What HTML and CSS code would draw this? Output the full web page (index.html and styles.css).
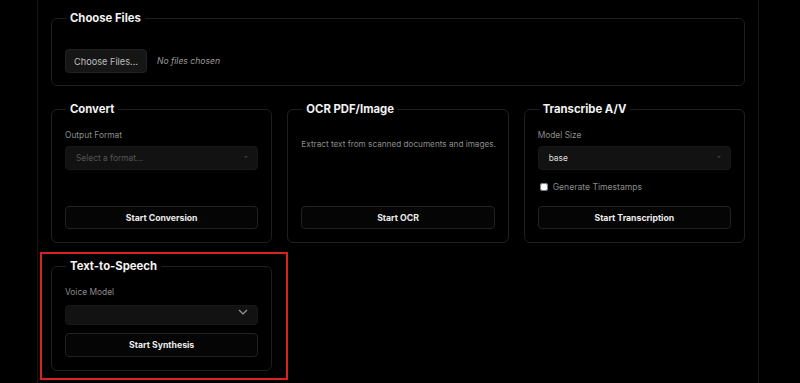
FILE: index.html
```html
<!DOCTYPE html>
<html lang="en">
<head>
  <meta charset="UTF-8">
  <meta name="viewport" content="width=device-width, initial-scale=1.0">
  <title>Media Tools</title>
  <link rel="stylesheet" href="styles.css">
</head>
<body>
  <div class="panel">
    <fieldset class="card files">
      <legend>Choose Files</legend>
      <div class="file-row">
        <button class="file-btn" type="button">Choose Files...</button>
        <span class="file-status">No files chosen</span>
      </div>
    </fieldset>

    <div class="tools">
      <fieldset class="card">
        <legend>Convert</legend>
        <label class="field-label">Output Format</label>
        <div class="select">
          <select class="placeholder">
            <option>Select a format...</option>
          </select>
          <span class="caret"></span>
        </div>
        <button class="action" type="button">Start Conversion</button>
      </fieldset>

      <fieldset class="card">
        <legend>OCR PDF/Image</legend>
        <p class="hint">Extract text from scanned documents and images.</p>
        <button class="action" type="button">Start OCR</button>
      </fieldset>

      <fieldset class="card">
        <legend>Transcribe A/V</legend>
        <label class="field-label">Model Size</label>
        <div class="select">
          <select>
            <option>base</option>
          </select>
          <span class="caret"></span>
        </div>
        <label class="check">
          <input type="checkbox">
          <span>Generate Timestamps</span>
        </label>
        <button class="action" type="button">Start Transcription</button>
      </fieldset>

      <div class="highlight">
        <fieldset class="card">
          <legend>Text-to-Speech</legend>
          <label class="field-label">Voice Model</label>
          <div class="select short">
            <select></select>
            <svg class="chevron" width="10" height="6" viewBox="0 0 10 6">
              <path d="M1 1l4 4 4-4" fill="none" stroke="#9a9a9a" stroke-width="1.2"/>
            </svg>
          </div>
          <button class="action tight" type="button">Start Synthesis</button>
        </fieldset>
      </div>
    </div>
  </div>
</body>
</html>
```

FILE: styles.css
```css
body {
  margin: 0;
  background: #000;
  color: #fff;
  font-family: Inter, "Liberation Sans", sans-serif;
  height: 383px;
  overflow: hidden;
}

.panel {
  margin-left: 37px;
  width: 694px;
  height: 383px;
  padding: 10px 13px 0;
  border-left: 1px solid #161616;
  border-right: 1px solid #161616;
}

.card {
  margin: 0;
  padding: 12px 13px 13px;
  border: 1px solid #1f1f1f;
  border-radius: 6px;
  display: flex;
  flex-direction: column;
  min-width: 0;
}

legend {
  margin-left: 1px;
  padding: 0 4px;
  font-size: 11.3px;
  line-height: 16px;
  font-weight: 700;
  color: #f2f2f2;
}

.files {
  padding-top: 23px;
  padding-bottom: 12px;
}

.file-row {
  display: flex;
  align-items: center;
  gap: 10px;
}

.file-btn {
  width: 82px;
  height: 24px;
  padding: 0;
  background: #161616;
  border: 1px solid #222;
  border-radius: 4px;
  color: #bdbdbd;
  font-family: inherit;
  font-size: 9.2px;
}

.file-status {
  font-size: 8.6px;
  font-style: italic;
  color: #9a9a9a;
}

.tools {
  margin-top: 15px;
  display: grid;
  grid-template-columns: repeat(3, 1fr);
  gap: 15px;
}

.field-label {
  display: block;
  font-size: 8.4px;
  line-height: 12px;
  color: #8c8c8c;
  margin-bottom: 4px;
}

.select {
  position: relative;
}

.select select {
  appearance: none;
  width: 100%;
  height: 24px;
  padding: 0 10px;
  background: #121212;
  border: 1px solid #181818;
  border-radius: 4px;
  color: #dcdcdc;
  font-family: inherit;
  font-size: 8.4px;
}

.select select.placeholder {
  color: #555;
}

.caret {
  position: absolute;
  right: 10px;
  top: 11px;
  width: 0;
  height: 0;
  border-left: 2px solid transparent;
  border-right: 2px solid transparent;
  border-top: 2px solid #3a3a3a;
}

.select.short select {
  height: 20px;
}

.chevron {
  position: absolute;
  right: 10px;
  top: 7px;
}

.hint {
  margin: 9px 0 0;
  font-size: 8.2px;
  line-height: 12px;
  color: #8c8c8c;
  white-space: nowrap;
}

.check {
  display: flex;
  align-items: center;
  gap: 5px;
  height: 16px;
  margin-top: 9px;
  font-size: 8.6px;
  color: #8c8c8c;
}

.check input {
  width: 8px;
  height: 8px;
  margin: 0 0 0 2px;
}

.action {
  margin-top: auto;
  height: 23px;
  background: #050505;
  border: 1px solid #222;
  border-radius: 4px;
  color: #ececec;
  font-family: inherit;
  font-size: 8.7px;
  font-weight: 700;
}

.check + .action {
  margin-top: 11px;
}

.action.tight {
  margin-top: 8px;
  height: 24px;
}

.highlight {
  position: relative;
}

.highlight::after {
  content: "";
  position: absolute;
  left: -11px;
  top: -6px;
  right: -16px;
  bottom: -9px;
  border: 2px solid #d8221d;
  pointer-events: none;
}
```
